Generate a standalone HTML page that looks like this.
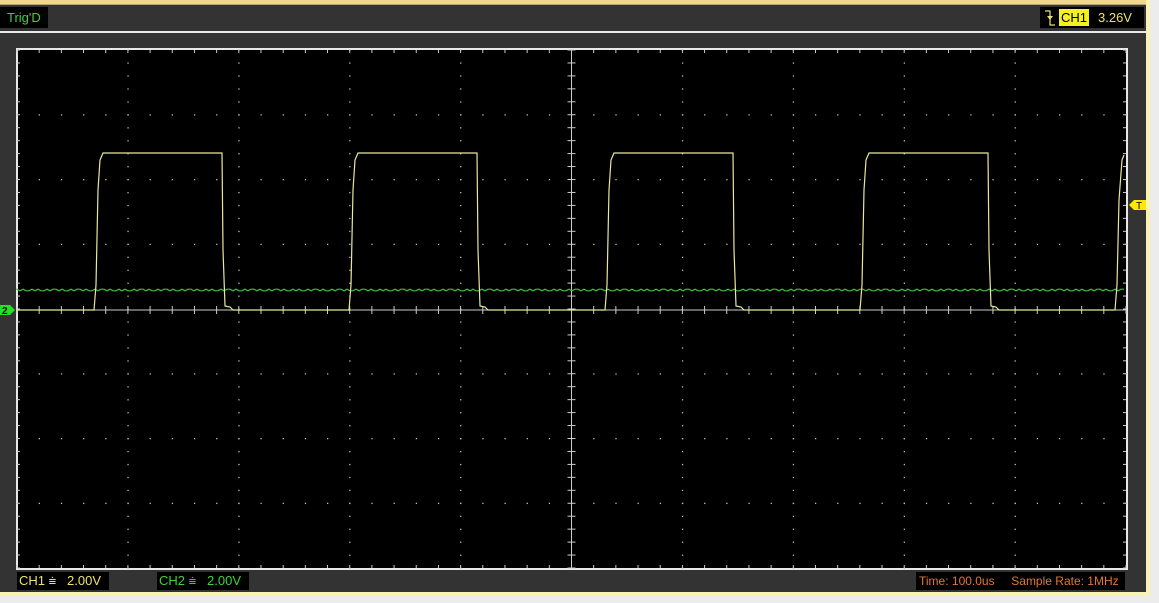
<!DOCTYPE html>
<html><head><meta charset="utf-8"><style>
html,body{margin:0;padding:0;width:1159px;height:603px;overflow:hidden;background:#333;font-family:"Liberation Sans",sans-serif}
.lbl{position:absolute;background:#000;font-size:13px;line-height:18px;white-space:pre}
</style></head><body>
<svg id="s" width="1159" height="603" style="position:absolute;left:0;top:0">
<rect x="0" y="0" width="1159" height="4" fill="#f1d68e"/>
<rect x="0" y="4" width="1159" height="1" fill="#b9a573"/>
<rect x="0" y="31" width="1146" height="2" fill="#e8e8e8"/>
<rect x="1146" y="0" width="4" height="596" fill="#fbf3b6"/>
<rect x="1150" y="0" width="9" height="603" fill="#ececec"/>
<rect x="0" y="592" width="1150" height="3" fill="#fbf3b6"/>
<rect x="0" y="595" width="1159" height="8" fill="#ececec"/>
<rect x="17" y="49" width="1110" height="520" fill="#000" stroke="#e8e8e8" stroke-width="2"/>
<g id="g"></g>
<polygon points="1129,205 1134,200 1146,200 1146,210 1134,210" fill="#ffe800"/>
<text x="1136" y="209" font-size="10" font-family="Liberation Sans" fill="#000">T</text>
<polygon points="0,305 10,305 15,310 10,315 0,315" fill="#22e022"/>
<text x="2" y="314" font-size="10" font-weight="bold" font-family="Liberation Sans" fill="#000">2</text>
</svg>
<div class="lbl" style="left:0;top:7px;width:48px;height:21px;color:#3fd23f;padding-left:7px;box-sizing:border-box;line-height:21px">Trig'D</div>
<div class="lbl" style="left:1040px;top:7px;width:104px;height:21px;line-height:21px;color:#ece070"><svg style="position:absolute;left:4px;top:3px" width="12" height="16"><path d="M1 1 H6 V15 H11" stroke="#ece070" fill="none" stroke-width="1.2"/><polygon points="3,6 9,6 6,10" fill="#ece070"/></svg><span style="position:absolute;left:19px;top:2px;line-height:17px;background:#f5f020;color:#000;padding:0 2px">CH1</span><span style="position:absolute;left:58px">3.26V</span></div>
<div class="lbl" style="left:17px;top:572px;width:92px;color:#ece070;padding-left:2px;box-sizing:border-box">CH1 ⩧   2.00V</div>
<div class="lbl" style="left:157px;top:572px;width:92px;color:#3fd23f;padding-left:2px;box-sizing:border-box">CH2 ⩧   2.00V</div>
<div class="lbl" style="left:916px;top:572px;width:209px;color:#e07830;padding-left:3px;box-sizing:border-box;font-size:12px">Time: 100.0us     Sample Rate: 1MHz</div>
<script>
var g=document.getElementById('g'),h='';
var L=17,R=1126,T=50,B=568,cx=571.5,cy=310;
var dx=(R-L)/10,dy=(B-T)/8;
for(var i=1;i<10;i++){var x=L+i*dx;if(i==5)continue;for(var y=T;y<B;y+=dy/5){h+='<rect x="'+(x-0.5)+'" y="'+(y-0.5)+'" width="1.3" height="1.3" fill="#bbb"/>';}}
for(var j=1;j<8;j++){var y=T+j*dy;if(j==4)continue;for(var x=L;x<R;x+=dx/5){h+='<rect x="'+(x-0.5)+'" y="'+(y-0.5)+'" width="1.3" height="1.3" fill="#bbb"/>';}}
h+='<line x1="'+L+'" y1="'+cy+'" x2="'+R+'" y2="'+cy+'" stroke="#ccc" stroke-width="1"/>';
h+='<line x1="'+cx+'" y1="'+T+'" x2="'+cx+'" y2="'+B+'" stroke="#ccc" stroke-width="1"/>';
for(var x=L;x<=R;x+=dx/5){h+='<line x1="'+x+'" y1="'+(cy-4)+'" x2="'+x+'" y2="'+(cy+4)+'" stroke="#ccc"/>';h+='<line x1="'+x+'" y1="'+T+'" x2="'+x+'" y2="'+(T+3)+'" stroke="#ccc"/>';h+='<line x1="'+x+'" y1="'+(B-3)+'" x2="'+x+'" y2="'+B+'" stroke="#ccc"/>';}
for(var y=T;y<=B;y+=dy/5){h+='<line x1="'+(cx-4)+'" y1="'+y+'" x2="'+(cx+4)+'" y2="'+y+'" stroke="#ccc"/>';h+='<line x1="'+L+'" y1="'+y+'" x2="'+(L+3)+'" y2="'+y+'" stroke="#ccc"/>';h+='<line x1="'+(R-3)+'" y1="'+y+'" x2="'+R+'" y2="'+y+'" stroke="#ccc"/>';}
var p='M'+L+' 290';for(var x=L;x<R;x+=3){p+=' L'+x+' '+(290+(Math.sin(x*1.3)>0?0.8:-0.8));}
h+='<path d="'+p+'" stroke="#3fbf3f" fill="none" stroke-width="1.2"/>';
var rises=[97,352,608,863];var d='M'+L+' 310';
rises.forEach(function(r){d+=' L'+(r-3)+' 310 L'+(r-1)+' 285 L'+(r+1)+' 190 L'+(r+3)+' 160 L'+(r+6)+' 153 L'+(r+125)+' 153 L'+(r+126)+' 250 L'+(r+128)+' 306 L'+(r+133)+' 307 L'+(r+136)+' 310';});
d+=' L1115 310 L1117 285 L1119 200 L1122 160 L1124 155';
h+='<path d="'+d+'" stroke="#e8e8a0" fill="none" stroke-width="1.2"/>';
g.innerHTML=h;
</script>
</body></html>
